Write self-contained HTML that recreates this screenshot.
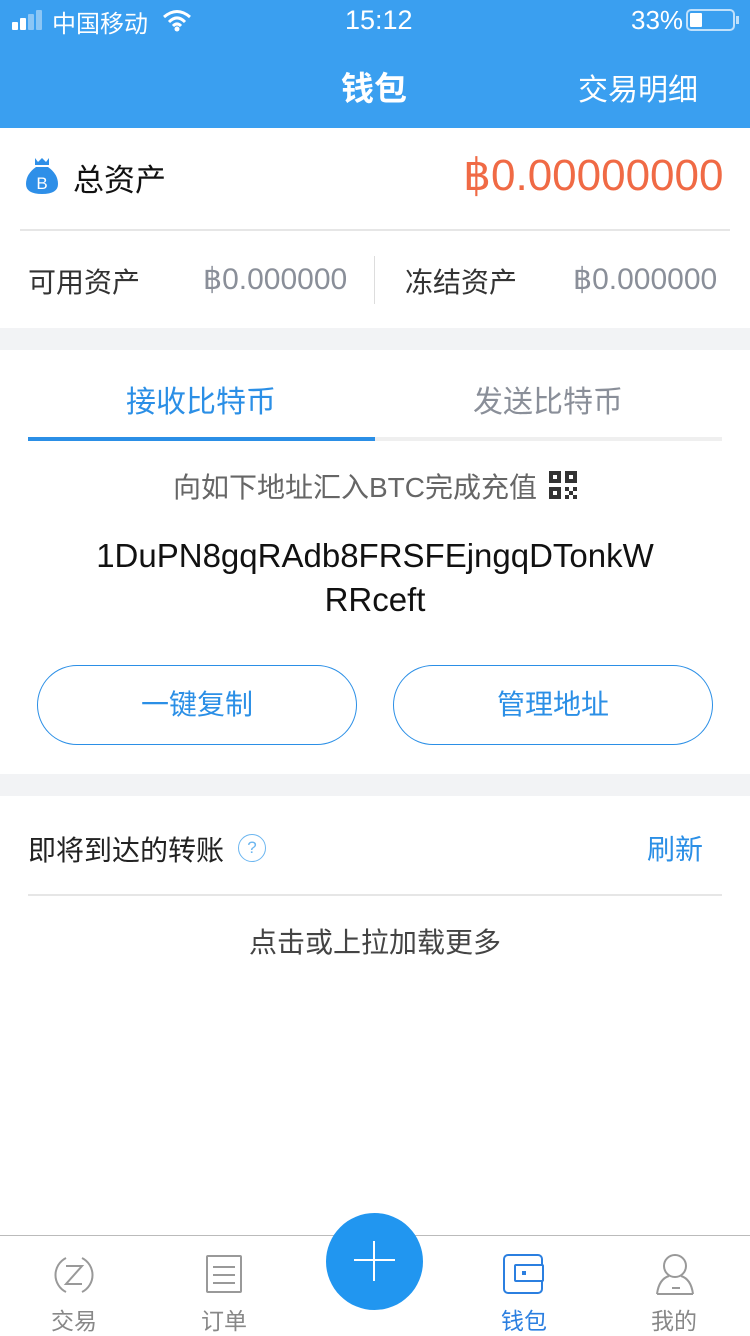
<!DOCTYPE html>
<html><head><meta charset="utf-8"><style>
*{margin:0;padding:0;box-sizing:border-box}
body{width:750px;height:1334px;background:#fff;font-family:"Liberation Sans","Noto Sans CJK SC",sans-serif;position:relative;overflow:hidden}
.a{position:absolute;white-space:nowrap}
</style></head><body>
<div class="a" style="left:0;top:0;width:750px;height:128px;background:#3a9ff0"></div>
<!-- status -->
<div class="a" style="left:12px;top:22px;width:6px;height:8px;background:#fff;border-radius:1px"></div>
<div class="a" style="left:20px;top:18px;width:6px;height:12px;background:#fff;border-radius:1px"></div>
<div class="a" style="left:28px;top:14px;width:6px;height:16px;background:#8cc6f5;border-radius:1px"></div>
<div class="a" style="left:36px;top:10px;width:6px;height:20px;background:#8cc6f5;border-radius:1px"></div>
<div class="a" style="left:52px;top:4px;color:#fff;font-size:24px">中国移动</div>
<svg class="a" style="left:162px;top:8px" width="30" height="24" viewBox="0 0 30 24"><path d="M2 9 Q15 -2 28 9 M7 14 Q15 6 23 14 M11 18 Q15 14 19 18" stroke="#fff" stroke-width="3" fill="none"/><circle cx="15" cy="21" r="2.5" fill="#fff"/></svg>
<div class="a" style="left:345px;top:5px;color:#fff;font-size:27px">15:12</div>
<div class="a" style="left:631px;top:5px;color:#fff;font-size:26px">33%</div>
<div class="a" style="left:686px;top:9px;width:49px;height:22px;border:2px solid #bfe0fb;border-radius:5px"><div style="position:absolute;left:2px;top:2px;width:12px;height:14px;background:#fff;border-radius:1px"></div></div>
<div class="a" style="left:736px;top:16px;width:3px;height:8px;background:#bfe0fb"></div>
<div class="a" style="left:341px;top:62px;color:#fff;font-size:33px;font-weight:bold">钱包</div>
<div class="a" style="left:578px;top:65px;color:#fff;font-size:30px">交易明细</div>
<!-- total -->
<svg class="a" style="left:24px;top:156px" width="36" height="40" viewBox="0 0 36 40"><path d="M11 2 L14 6 L18 2 L22 6 L25 2 L25 9 L11 9Z" fill="#2e8fe8"/><path d="M12 11 L24 11 Q34 18 34 28 Q34 38 18 38 Q2 38 2 28 Q2 18 12 11Z" fill="#2e8fe8"/><text x="18" y="33" font-size="17" fill="#fff" text-anchor="middle" font-family="Liberation Sans">B</text></svg>
<div class="a" style="left:73px;top:155px;font-size:31px;color:#111">总资产</div>
<div class="a" style="left:463px;top:150px;font-size:44px;color:#f06a45">฿0.00000000</div>
<div class="a" style="left:20px;top:229px;width:710px;height:2px;background:#e6e6e6"></div>
<div class="a" style="left:28px;top:261px;font-size:28px;color:#333">可用资产</div>
<div class="a" style="left:203px;top:262px;font-size:30px;color:#8a8f99">฿0.000000</div>
<div class="a" style="left:374px;top:256px;width:1px;height:48px;background:#ddd"></div>
<div class="a" style="left:405px;top:261px;font-size:28px;color:#333">冻结资产</div>
<div class="a" style="left:573px;top:262px;font-size:30px;color:#8a8f99">฿0.000000</div>
<div class="a" style="left:0;top:328px;width:750px;height:22px;background:#f2f3f5"></div>
<!-- tabs -->
<div class="a" style="left:126px;top:377px;font-size:30px;color:#2b8fe6">接收比特币</div>
<div class="a" style="left:473px;top:377px;font-size:30px;color:#8a8f99">发送比特币</div>
<div class="a" style="left:28px;top:437px;width:694px;height:4px;background:#efefef"></div>
<div class="a" style="left:28px;top:437px;width:347px;height:4px;background:#2b8fe6"></div>
<div class="a" style="left:173px;top:466px;font-size:28px;color:#666">向如下地址汇入BTC完成充值</div>
<svg class="a" style="left:549px;top:471px" width="28" height="28" viewBox="0 0 7 7" shape-rendering="crispEdges"><path d="M0 0h3v3h-3zM4 0h3v3h-3zM0 4h3v3h-3z" fill="#333"/><path d="M1 1h1v1h-1zM5 1h1v1h-1zM1 5h1v1h-1z" fill="#fff"/><path d="M4 4h1v1h-1zM6 4h1v1h-1zM5 5h1v1h-1zM4 6h1v1h-1zM6 6h1v1h-1z" fill="#333"/></svg>
<div class="a" style="left:0;top:534px;width:750px;text-align:center;font-size:33px;color:#111;line-height:44px;white-space:normal">1DuPN8gqRAdb8FRSFEjngqDTonkW<br>RRceft</div>
<div class="a" style="left:37px;top:665px;width:320px;height:80px;border:1.5px solid #2b8fe6;border-radius:40px;text-align:center;line-height:77px;font-size:28px;color:#2b8fe6">一键复制</div>
<div class="a" style="left:393px;top:665px;width:320px;height:80px;border:1.5px solid #2b8fe6;border-radius:40px;text-align:center;line-height:77px;font-size:28px;color:#2b8fe6">管理地址</div>
<div class="a" style="left:0;top:774px;width:750px;height:22px;background:#f2f3f5"></div>
<div class="a" style="left:28px;top:829px;font-size:28px;color:#222">即将到达的转账</div>
<div class="a" style="left:238px;top:834px;width:28px;height:28px;border:1.5px solid #6cb6f0;border-radius:50%;color:#6cb6f0;font-size:17px;text-align:center;line-height:25px">?</div>
<div class="a" style="left:647px;top:828px;font-size:28px;color:#2b8fe6">刷新</div>
<div class="a" style="left:28px;top:894px;width:694px;height:2px;background:#e6e6e6"></div>
<div class="a" style="left:0;top:921px;width:750px;text-align:center;font-size:28px;color:#444">点击或上拉加载更多</div>
<!-- tabbar -->
<div class="a" style="left:0;top:1235px;width:750px;height:1px;background:#bbb"></div>
<div class="a" style="left:326px;top:1213px;width:97px;height:97px;border-radius:50%;background:#2196f0"></div>
<div class="a" style="left:354px;top:1259px;width:41px;height:2px;background:#fff"></div>
<div class="a" style="left:373px;top:1241px;width:2px;height:40px;background:#fff"></div>
<svg class="a" style="left:52px;top:1254px" width="44" height="42" viewBox="0 0 44 42"><path d="M14 4 A19 19 0 0 0 14 38 M30 4 A19 19 0 0 1 30 38" stroke="#999" stroke-width="2" fill="none"/><path d="M14 12 L30 12 L14 30 L30 30" stroke="#999" stroke-width="2" fill="none"/></svg>
<div class="a" style="left:51px;top:1302px;font-size:23px;color:#888">交易</div>
<div class="a" style="left:206px;top:1255px;width:36px;height:38px;border:2px solid #999;border-radius:2px"></div>
<div class="a" style="left:213px;top:1266px;width:22px;height:2px;background:#999;box-shadow:0 8px 0 #999,0 16px 0 #999"></div>
<div class="a" style="left:201px;top:1302px;font-size:23px;color:#888">订单</div>
<div class="a" style="left:503px;top:1254px;width:40px;height:40px;border:2.5px solid #2b7fe0;border-radius:5px"></div>
<div class="a" style="left:514px;top:1264px;width:30px;height:18px;border:2.5px solid #2b7fe0;border-radius:2px;background:#fff"></div>
<div class="a" style="left:522px;top:1271px;width:4px;height:4px;background:#2b7fe0"></div>
<div class="a" style="left:501px;top:1302px;font-size:23px;color:#2b7fe0">钱包</div>
<svg class="a" style="left:654px;top:1252px" width="42" height="44" viewBox="0 0 42 44"><circle cx="21" cy="14" r="11" stroke="#999" stroke-width="2" fill="none"/><path d="M3 42 Q5 27 15 24 M39 42 Q37 27 27 24 M3 42 L39 42 M18 36 L26 36" stroke="#999" stroke-width="2" fill="none"/></svg>
<div class="a" style="left:651px;top:1302px;font-size:23px;color:#888">我的</div>
</body></html>
